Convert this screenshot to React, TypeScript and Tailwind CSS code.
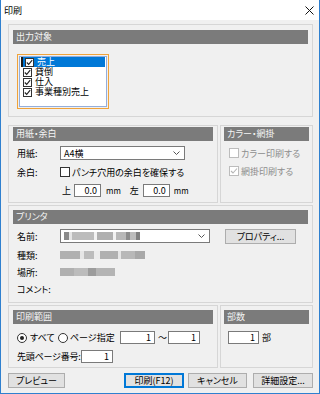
import React from 'react';

const FONT = "font-['Noto_Sans_CJK_JP','Noto_Sans',sans-serif]";

const Header: React.FC<{ children: React.ReactNode }> = ({ children }) => (
  <div className="h-[14px] bg-[#7b7b7b] pl-[3px] text-[9px] leading-[14px] text-[#f4f4f4]">{children}</div>
);

const Check: React.FC<{ checked?: boolean; disabled?: boolean }> = ({ checked, disabled }) => (
  <div
    className={`w-[10px] h-[10px] shrink-0 border bg-white flex items-center justify-center ${
      disabled ? 'border-[#bcbcbc]' : 'border-[#333333]'
    }`}
  >
    {checked && (
      <svg width="8" height="8" viewBox="0 0 8 8">
        <path d="M1 4 3 6 7 1.5" fill="none" stroke={disabled ? '#b5b5b5' : '#222'} strokeWidth="1.1" />
      </svg>
    )}
  </div>
);

const Radio: React.FC<{ checked?: boolean }> = ({ checked }) => (
  <div className="w-[10px] h-[10px] shrink-0 rounded-full border border-[#333333] bg-white flex items-center justify-center">
    {checked && <div className="w-[4px] h-[4px] rounded-full bg-[#222]" />}
  </div>
);

const TextBox: React.FC<{ value: string; className?: string }> = ({ value, className }) => (
  <div className={`h-[13px] border border-[#7a7a7a] bg-white text-right pr-[3px] text-[9px] leading-[11px] ${className ?? ''}`}>
    {value}
  </div>
);

const Select: React.FC<{ children: React.ReactNode; className?: string }> = ({ children, className }) => (
  <div className={`h-[14px] border border-[#7a7a7a] bg-white flex items-center pl-[3px] ${className ?? ''}`}>
    {children}
    <svg className="ml-auto mr-[4px]" width="7" height="4" viewBox="0 0 7 4">
      <path d="M0.5 0.5 3.5 3.5 6.5 0.5" fill="none" stroke="#555" strokeWidth="1" />
    </svg>
  </div>
);

const Button: React.FC<{ children: React.ReactNode; className?: string; primary?: boolean }> = ({ children, className, primary }) => (
  <div
    className={`h-[15px] border bg-[#e1e1e1] flex items-center justify-center text-[9px] ${
      primary ? 'border-[#0078d7] shadow-[inset_0_0_0_1px_#0078d7]' : 'border-[#adadad]'
    } ${className ?? ''}`}
  >
    {children}
  </div>
);

// blurred (hidden) printer info
const Blur: React.FC<{ blocks: [number, string][] }> = ({ blocks }) => (
  <div className="flex items-center h-[8px] blur-[0.7px]">
    {blocks.map(([w, c], i) => (
      <span key={i} className="h-[8px]" style={{ width: w, background: c }} />
    ))}
  </div>
);

const listItems = ['売上', '貸倒', '仕入', '事業種別売上'];

export default function App() {
  return (
    <div className={`${FONT} w-[320px] h-[394px] bg-[#f0f0f0] border-x border-b border-[#2f80cf] text-[9px] leading-none text-black whitespace-nowrap overflow-hidden [font-feature-settings:'palt']`}>
      <div className="h-[20px] bg-white flex items-center justify-between pl-[3px] pr-[5px]">
        <span className="text-[9px]">印刷</span>
        <svg width="9" height="9" viewBox="0 0 9 9">
          <path d="M0.5 0.5 8.5 8.5 M8.5 0.5 0.5 8.5" stroke="#111" strokeWidth="1" />
        </svg>
      </div>

      <div className="pl-[7px] pr-[6px] pt-[4px]">
        {/* 出力対象 */}
        <div className="h-[93px] border border-[#d6d6d6] px-[4px] pt-[5px]">
          <Header>出力対象</Header>
          <div className="ml-[4px] mt-[10px] w-[92px] h-[55px] border border-[#f0a33a] p-px">
            <div className="h-full border border-[#94aedb] bg-white">
              {listItems.map((item, i) => (
                <div
                  key={item}
                  className={`h-[10px] flex items-center pl-[2px] mx-px ${i === 0 ? 'bg-[#0078d7] text-white border-l-2 border-[#1a1a1a] pl-0' : ''}`}
                >
                  <div className="w-[9px] h-[9px] shrink-0 border border-[#333333] bg-white flex items-center justify-center">
                    <svg width="7" height="7" viewBox="0 0 7 7">
                      <path d="M0.8 3.5 2.7 5.4 6.2 1.2" fill="none" stroke="#222" strokeWidth="1.1" />
                    </svg>
                  </div>
                  <span className="ml-[3px] leading-[10px]">{item}</span>
                </div>
              ))}
            </div>
          </div>
        </div>

        {/* 用紙・余白 / カラー・網掛 */}
        <div className="mt-[8px] flex gap-[2px] h-[78px]">
          <div className="w-[210px] border border-[#d6d6d6] px-[4px] pt-px">
            <Header>用紙・余白</Header>
            <div className="mt-[5px] flex items-center h-[14px]">
              <span className="w-[47px] pl-[4px]">用紙:</span>
              <Select className="w-[125px]">A4横</Select>
            </div>
            <div className="mt-[5px] flex items-center h-[14px]">
              <span className="w-[47px] pl-[4px]">余白:</span>
              <Check />
              <span className="ml-[2px]">パンチ穴用の余白を確保する</span>
            </div>
            <div className="mt-[5px] flex items-center h-[13px]">
              <span className="ml-[49px] w-[10px]">上</span>
              <TextBox value="0.0" className="ml-[2px] w-[27px]" />
              <span className="ml-[5px] text-[8px]">mm</span>
              <span className="ml-[9px] w-[10px]">左</span>
              <TextBox value="0.0" className="ml-[3px] w-[27px]" />
              <span className="ml-[4px] text-[8px]">mm</span>
            </div>
          </div>
          <div className="flex-1 border border-[#d6d6d6] px-[3px] pt-px">
            <Header>カラー・網掛</Header>
            <div className="mt-[6px] ml-[5px] flex items-center h-[12px] text-[#8d8d8d]">
              <Check disabled />
              <span className="ml-[2px]">カラー印刷する</span>
            </div>
            <div className="mt-[6px] ml-[5px] flex items-center h-[12px] text-[#8d8d8d]">
              <Check checked disabled />
              <span className="ml-[2px]">網掛印刷する</span>
            </div>
          </div>
        </div>

        {/* プリンタ */}
        <div className="mt-[2px] h-[98px] border border-[#d6d6d6] px-[4px] pt-[4px]">
          <Header>プリンタ</Header>
          <div className="mt-[5px] flex items-center h-[14px]">
            <span className="w-[47px] pl-[4px]">名前:</span>
            <Select className="w-[150px]">
              <Blur
                blocks={[
                  [5, '#8a8a8a'], [3, '#e6e6e6'], [22, '#bcbcbc'], [3, '#f2f2f2'], [16, '#b0b0b0'],
                  [3, '#f2f2f2'], [10, '#b8b8b8'], [4, '#8c8c8c'], [6, '#bcbcbc'], [4, '#808080'],
                ]}
              />
            </Select>
            <Button className="ml-[15px] w-[71px] h-[14px]">プロパティ...</Button>
          </div>
          <div className="mt-[5px] flex items-center h-[14px]">
            <span className="w-[47px] pl-[4px]">種類:</span>
            <Blur
              blocks={[
                [20, '#b0b0b0'], [4, '#e6e6e6'], [10, '#bcbcbc'], [6, '#ececec'], [18, '#b0b0b0'],
                [3, '#e6e6e6'], [14, '#b8b8b8'], [10, '#a8a8a8'],
              ]}
            />
          </div>
          <div className="mt-[3px] flex items-center h-[14px]">
            <span className="w-[47px] pl-[4px]">場所:</span>
            <Blur blocks={[[14, '#b0b0b0'], [14, '#bcbcbc'], [8, '#9c9c9c'], [19, '#b4b4b4']]} />
          </div>
          <div className="mt-[3px] flex items-center h-[14px]">
            <span className="pl-[4px]">コメント:</span>
          </div>
        </div>

        {/* 印刷範囲 / 部数 */}
        <div className="mt-[2px] flex gap-[2px] h-[63px]">
          <div className="w-[210px] border border-[#d6d6d6] px-[4px] pt-[4px]">
            <Header>印刷範囲</Header>
            <div className="mt-[7px] flex items-center h-[13px]">
              <div className="w-[45px] pl-[4px] flex items-center">
                <Radio checked />
                <span className="ml-[3px]">すべて</span>
              </div>
              <div className="w-[62px] flex items-center">
                <Radio />
                <span className="ml-[2px]">ページ指定</span>
              </div>
              <TextBox value="1" className="w-[35px]" />
              <span className="ml-[3px] w-[10px]">〜</span>
              <TextBox value="1" className="w-[32px]" />
            </div>
            <div className="mt-[6px] flex items-center h-[13px]">
              <span className="w-[68px] pl-[4px] tracking-[-0.2px]">先頭ページ番号:</span>
              <TextBox value="1" className="w-[32px]" />
            </div>
          </div>
          <div className="flex-1 border border-[#d6d6d6] px-[3px] pt-[4px]">
            <Header>部数</Header>
            <div className="mt-[7px] flex items-center h-[13px]">
              <TextBox value="1" className="ml-[4px] w-[31px]" />
              <span className="ml-[3px]">部</span>
            </div>
          </div>
        </div>

        {/* buttons */}
        <div className="mt-[5px] flex h-[15px]">
          <Button className="w-[57px]">プレビュー</Button>
          <Button primary className="ml-[59px] w-[60px]">印刷(F12)</Button>
          <Button className="ml-[4px] w-[59px]">キャンセル</Button>
          <Button className="ml-[6px] w-[60px]">詳細設定...</Button>
        </div>
      </div>
    </div>
  );
}
